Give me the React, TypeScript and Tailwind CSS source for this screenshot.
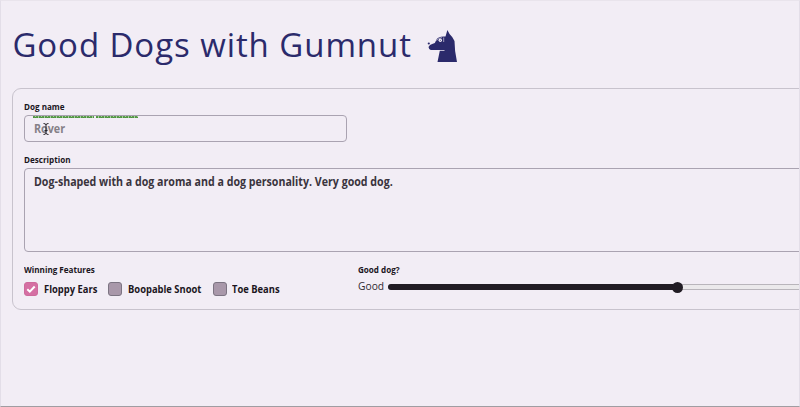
import React from "react";

function Label({ children }: { children: React.ReactNode }) {
  return (
    <div className="h-3 origin-left scale-x-[0.87] whitespace-nowrap text-[9.3px] font-bold leading-[13px] text-[#1b161d]">
      {children}
    </div>
  );
}

function Feature({ label, checked, box }: { label: string; checked?: boolean; box: string }) {
  return (
    <div className={`flex items-center gap-[5.5px] ${box}`}>
      <span
        className={`flex size-[14px] shrink-0 items-center justify-center rounded-[3px] border ${
          checked ? "border-[#ce6a9c] bg-[#d56fa3]" : "border-[#7c7482] bg-[#a998aa]"
        }`}
      >
        {checked && (
          <svg viewBox="0 0 14 14" className="size-[14px] shrink-0" fill="none" stroke="#fff" strokeWidth="2">
            <path d="M3.3 7.2 5.8 9.6 10.7 4.5" />
          </svg>
        )}
      </span>
      <span className="origin-left scale-x-[0.87] whitespace-nowrap text-[10.8px] font-bold leading-4 text-[#1b161d]">
        {label}
      </span>
    </div>
  );
}

function DogLogo() {
  return (
    <svg viewBox="0 0 32 34" className="mt-[2px] h-[34px] w-8" fill="#2b2a6b">
      <path d="M20.4 1 Q22 5 25.2 8 L27.5 12 Q27.5 22 30 33 H10.5 L12.8 21.7 H17.5 V20.9 H3.8 Q1.8 20.4 1.5 18 L3 16 Q5 14.8 7.8 13.9 L10 9.8 Q11.5 8.2 14 7.7 Q16.5 7.2 18.5 7.6 Z" />
      <circle cx="1.8" cy="14.5" r="1.1" />
      <circle cx="13.3" cy="11.2" r="1.7" fill="#f2edf5" />
      <path d="M9.5 11.5Q11.4 9 15 8.6" fill="none" stroke="#f2edf5" strokeWidth=".6" />
      <path d="M16.7 8.5V13" fill="none" stroke="#f2edf5" strokeWidth=".6" />
      <circle cx="13.3" cy="11.3" r=".5" />
    </svg>
  );
}

export default function App() {
  return (
    <div className="h-[407px] w-[800px] overflow-hidden border border-b-[#a09da2] border-l-[#e3dee8] border-r-[#e3dee8] border-t-[#e9e4ec] bg-[#f2edf5] pl-[11.4px] font-['Open_Sans',sans-serif]">
      <header className="flex h-[87px] items-center gap-[15px] pt-[1px]">
        <h1 className="w-[400px] whitespace-nowrap text-[33px] leading-[44px] tracking-[0.93px] text-[#2b2a6b]">
          Good Dogs with Gumnut
        </h1>
        <DogLogo />
      </header>
      <section className="h-[222px] w-[840px] rounded-[9px] border border-[#c8c3cd] pl-[11px] pt-[11px]">
        <Label>Dog name</Label>
        <div className="relative mt-[3px] flex h-[27px] w-[323px] items-center rounded-[4px] border border-[#aaa3b1] pl-[8.5px] text-[11.7px] font-bold text-[#858087]">
          <span className="origin-left scale-x-[0.92]">Rover</span>
          <span className="absolute left-2 top-0 h-[2px] w-[61px] border-b border-dotted border-[#4a963b] bg-[repeating-linear-gradient(90deg,#5a9a4b_0_2px,#a9cca2_2px_3px)]" />
          <span className="absolute left-[71px] top-0 h-[2px] w-[42px] border-b border-dotted border-[#4a963b] bg-[repeating-linear-gradient(90deg,#5a9a4b_0_2px,#a9cca2_2px_3px)]" />
          <svg className="absolute left-[17px] top-[7px] h-3 w-2" viewBox="0 0 8 12" fill="none" stroke="#29252b">
            <path d="M1.5 .5Q4 .5 4 2V10Q4 11.5 1.5 11.5M6.5 .5Q4 .5 4 2M4 10Q4 11.5 6.5 11.5M2.5 7.5H5.5" />
          </svg>
        </div>
        <div className="mt-[11px]">
          <Label>Description</Label>
        </div>
        <div className="mt-[3px] h-[84px] rounded-[4px] border border-[#aaa3b1] pl-[8.5px] pt-[4px] text-[11.7px] font-bold leading-4 text-[#3a343d]">
          <p className="origin-left scale-x-[0.91] whitespace-nowrap">
            Dog-shaped with a dog aroma and a dog personality. Very good dog.
          </p>
        </div>
        <div className="mt-[11px] flex">
          <div className="w-[334px]">
            <Label>Winning Features</Label>
            <div className="mt-[6px] flex">
              <Feature label="Floppy Ears" checked box="w-[84px]" />
              <Feature label="Boopable Snoot" box="w-[104.5px]" />
              <Feature label="Toe Beans" box="w-[90px]" />
            </div>
          </div>
          <div>
            <Label>Good dog?</Label>
            <div className="mt-[4px] flex h-4 items-center">
              <div className="mb-[3px] w-[30px] shrink-0">
                <span className="block origin-left scale-x-[0.95] text-[10.8px] leading-4 text-[#2f2a32]">Good</span>
              </div>
              <div className="flex h-[6px] w-[430px] items-center rounded-full border border-[#b9b5bb] bg-[#ebe9eb]">
                <div className="-ml-px h-[6px] w-[285px] shrink-0 rounded-l-full bg-[#211c24]" />
                <div className="-ml-px size-[11px] shrink-0 rounded-full bg-[#211c24]" />
              </div>
            </div>
          </div>
        </div>
      </section>
    </div>
  );
}
